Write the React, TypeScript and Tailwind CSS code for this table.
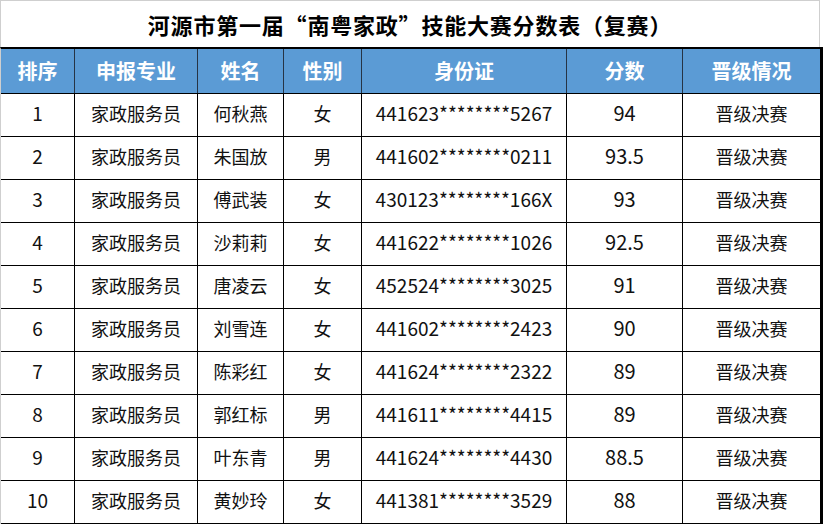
import React from "react";

const rows = [
  ["1", "家政服务员", "何秋燕", "女", "441623********5267", "94", "晋级决赛"],
  ["2", "家政服务员", "朱国放", "男", "441602********0211", "93.5", "晋级决赛"],
  ["3", "家政服务员", "傅武装", "女", "430123********166X", "93", "晋级决赛"],
  ["4", "家政服务员", "沙莉莉", "女", "441622********1026", "92.5", "晋级决赛"],
  ["5", "家政服务员", "唐凌云", "女", "452524********3025", "91", "晋级决赛"],
  ["6", "家政服务员", "刘雪连", "女", "441602********2423", "90", "晋级决赛"],
  ["7", "家政服务员", "陈彩红", "女", "441624********2322", "89", "晋级决赛"],
  ["8", "家政服务员", "郭红标", "男", "441611********4415", "89", "晋级决赛"],
  ["9", "家政服务员", "叶东青", "男", "441624********4430", "88.5", "晋级决赛"],
  ["10", "家政服务员", "黄妙玲", "女", "441381********3529", "88", "晋级决赛"],
];

const headers = ["排序", "申报专业", "姓名", "性别", "身份证", "分数", "晋级情况"];

const font = { fontFamily: '"Microsoft YaHei", "Noto Sans CJK SC", "Noto Sans", sans-serif' };

export default function App() {
  return (
    <div className="w-[824px] h-[524px] bg-white overflow-hidden" style={font}>
      <div className="w-[823px]">
        <div className="h-[47px] border-l border-t border-r border-[#cfcfcf] mr-[3px] flex items-center justify-center text-[22px] font-bold text-black tracking-[0.8px]">
          河源市第一届“南粤家政”技能大赛分数表（复赛）
        </div>
        <div className="border-t-2 border-black border-r-[3px] border-l border-l-[#cfcfcf]">
          <div className="grid grid-cols-[74px_123px_86px_78px_205px_116px_137px] h-[45px] bg-[#5b9bd5] border-b border-black">
            {headers.map((h, i) => (
              <div
                key={i}
                className={`flex items-center justify-center pb-[1px] text-white font-bold text-[20px] ${i < 6 ? "border-r border-[#263445]" : ""}`}
              >
                {h}
              </div>
            ))}
          </div>
          {rows.map((r, ri) => (
            <div
              key={ri}
              className={`grid grid-cols-[74px_123px_86px_78px_205px_116px_137px] ${ri === 9 ? "h-[45px] border-b-[3px]" : "h-[43px] border-b"} border-black`}
            >
              {r.map((c, i) => (
                <div
                  key={i}
                  className={`flex items-center justify-center pb-[4px] text-[#111] ${i === 0 || i === 4 ? "text-[19px]" : i === 5 ? "text-[20px]" : "text-[18px]"} ${i < 6 ? "border-r border-black" : ""}`}
                >
                  {c}
                </div>
              ))}
            </div>
          ))}
        </div>
      </div>
    </div>
  );
}
